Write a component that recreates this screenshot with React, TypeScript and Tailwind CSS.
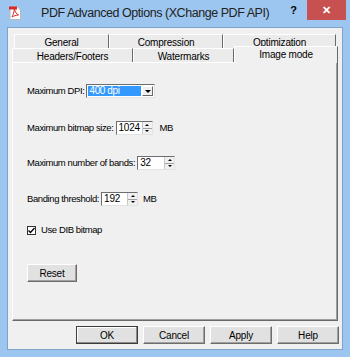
import { useState } from "react";

const font = { fontFamily: '"Liberation Sans", Arial, sans-serif' };

const SpinBox = ({ value, width }: { value: string; width: string }) => (
  <div className={`flex h-[14px] ${width} border border-t-[#6d6d6d] border-l-[#6d6d6d] border-r-[#e3e3e3] border-b-[#e3e3e3] bg-white`}>
    <div className="flex-1 pl-[2px] text-[10px] leading-[12px] tracking-[-0.2px] text-black">{value}</div>
    <div className="flex w-[10px] flex-col border-l border-[#c8c8c8] bg-[#f0f0f0]">
      <div className="flex flex-1 items-center justify-center border-b border-[#a0a0a0]">
        <div className="h-0 w-0 border-x-[2px] border-b-[2px] border-x-transparent border-b-black" />
      </div>
      <div className="flex flex-1 items-center justify-center">
        <div className="h-0 w-0 border-x-[2px] border-t-[2px] border-x-transparent border-t-black" />
      </div>
    </div>
  </div>
);

const Button = ({ label, primary, className }: { label: string; primary?: boolean; className?: string }) => (
  <button
    className={`flex h-[18px] items-center justify-center border bg-[#e1e1e1] text-[10px] tracking-[-0.2px] text-black ${
      primary
        ? "border-[#3c3c3c] shadow-[inset_-1px_-1px_0_#8a8a8a,inset_1px_1px_0_#ffffff]"
        : "border-t-[#ffffff] border-l-[#ffffff] border-r-[#6d6d6d] border-b-[#6d6d6d] shadow-[inset_-1px_-1px_0_#a0a0a0]"
    } ${className ?? ""}`}
  >
    {label}
  </button>
);

const Tab = ({ label, width, selected }: { label: string; width: string; selected?: boolean }) => (
  <div
    className={`flex items-start justify-center ${width} border-l border-t border-l-white border-t-white border-r border-r-[#696969] text-[10px] leading-[13px] tracking-[-0.2px] text-black ${
      selected ? "relative z-10 -mt-[2px] h-[17px] bg-[#f0f0f0] pt-[1px]" : "h-[15px] bg-[#ebebeb] pt-[1px]"
    }`}
  >
    {label}
  </div>
);

export default function App() {
  const [dib, setDib] = useState(true);

  return (
    <div className="flex h-[357px] w-[350px] flex-col bg-[#9cc6ef]" style={font}>
      {/* title bar */}
      <div className="flex h-[27px] items-start">
        <div className="ml-[9px] mt-[6px] flex h-[14px] w-[12px] items-start justify-center">
          <svg width="12" height="14" viewBox="0 0 12 14">
            <path d="M1 0.5h7l3.5 3.5v9.5h-10.5z" fill="#ffffff" stroke="#b9b9b9" />
            <rect x="0" y="0.5" width="8" height="3" fill="#d62a2a" />
            <path d="M3 11c1-2 2-5 2.5-8c0.5 3 2 5 4 6c-2 0-5 1-6.5 2z" fill="none" stroke="#d62a2a" strokeWidth="1" />
          </svg>
        </div>
        <div className="ml-[20px] mt-[5px] whitespace-nowrap text-[12.5px] leading-[16px] tracking-[-0.45px] text-[#222]">
          PDF Advanced Options (XChange PDF API)
        </div>
        <div className="ml-auto mt-[4px] mr-[10px] text-[11px] font-bold leading-[12px] text-black">?</div>
        <div className="mr-[4px] flex h-[20px] w-[39px] items-center justify-center bg-[#c75050] text-[11px] font-bold text-white">
          ✕
        </div>
      </div>

      {/* client area */}
      <div className="mx-[7px] flex h-[323px] flex-col border border-[#7ea3c9] bg-[#f0f0f0]">
        {/* tabs */}
        <div className="ml-[6px] mt-[6px] flex">
          <Tab label="General" width="w-[95px]" />
          <Tab label="Compression" width="w-[114px]" />
          <Tab label="Optimization" width="w-[113px]" />
        </div>
        <div className="-mt-[1px] ml-[4px] flex">
          <Tab label="Headers/Footers" width="w-[121px]" />
          <Tab label="Watermarks" width="w-[101px]" />
          <Tab label="Image mode" width="w-[104px]" selected />
        </div>

        {/* panel */}
        <div className="ml-[4px] -mt-[1px] flex h-[259px] w-[326px] flex-col border border-l-white border-t-white border-r-[#696969] border-b-[#696969] pl-[14px] text-[9.5px] tracking-[-0.4px] text-black shadow-[inset_-1px_-1px_0_#a0a0a0]">
          <div className="mt-[21px] flex h-[14px] items-center gap-[2px]">
            <span>Maximum DPI:</span>
            <div className="flex h-[14px] w-[69px] border border-t-[#6d6d6d] border-l-[#6d6d6d] border-r-[#e3e3e3] border-b-[#e3e3e3] bg-white p-[1px]">
              <div className="flex-1 bg-[#3399ff] pl-[1px] text-[10px] leading-[10px] text-white">400 dpi</div>
              <div className="ml-[1px] flex w-[11px] items-center justify-center border border-t-white border-l-white border-r-[#696969] border-b-[#696969] bg-[#f0f0f0]">
                <div className="h-0 w-0 border-x-[3px] border-t-[3px] border-x-transparent border-t-black" />
              </div>
            </div>
          </div>

          <div className="mt-[23px] flex h-[14px] items-center gap-[2px]">
            <span>Maximum bitmap size:</span>
            <SpinBox value="1024" width="w-[37px]" />
            <span className="ml-[5px]">MB</span>
          </div>

          <div className="mt-[21px] flex h-[14px] items-center gap-[2px]">
            <span>Maximum number of bands:</span>
            <SpinBox value="32" width="w-[38px]" />
          </div>

          <div className="mt-[22px] flex h-[14px] items-center gap-[2px]">
            <span>Banding threshold:</span>
            <SpinBox value="192" width="w-[37px]" />
            <span className="ml-[3px]">MB</span>
          </div>

          <div className="mt-[17px] flex h-[14px] items-center">
            <div
              onClick={() => setDib(!dib)}
              className="flex h-[9px] w-[9px] items-center justify-center border border-[#333] bg-white"
            >
              {dib && (
                <svg width="7" height="7" viewBox="0 0 7 7">
                  <path d="M0.5 3.5l2 2l4-4.5" fill="none" stroke="#000" strokeWidth="1.4" />
                </svg>
              )}
            </div>
            <span className="ml-[5px]">Use DIB bitmap</span>
          </div>

          <Button label="Reset" className="mt-[27px] h-[17px] w-[50px]" />
        </div>

        {/* bottom buttons */}
        <div className="mt-[5px] flex justify-end gap-[5px] pr-[3px]">
          <Button label="OK" primary className="w-[62px]" />
          <Button label="Cancel" className="w-[62px]" />
          <Button label="Apply" className="w-[62px]" />
          <Button label="Help" className="w-[62px]" />
        </div>
      </div>
    </div>
  );
}
